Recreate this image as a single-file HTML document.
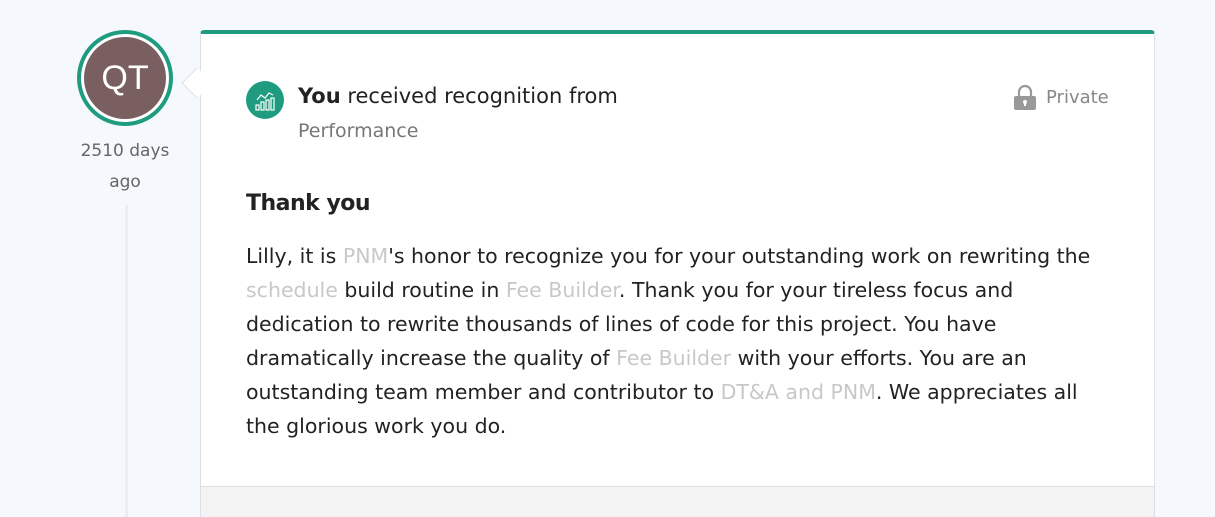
<!DOCTYPE html>
<html style="width:1215px;height:517px;overflow:hidden"><head><meta charset="utf-8"><style>
*{margin:0;padding:0;box-sizing:border-box}
body{width:1215px;height:517px;overflow:hidden;background:#f5f8fc;font-family:"DejaVu Sans","Liberation Sans",sans-serif;position:relative;color:#222}
.av{position:absolute;left:77px;top:30px;width:96px;height:96px;border-radius:50%;border:4px solid #1f9c7f;background:#fff;}
.av div{position:absolute;left:3px;top:3px;width:82px;height:82px;border-radius:50%;background:#7a5f60;color:#fff;font-size:34px;text-align:center;line-height:82px;font-family:"Liberation Sans",sans-serif}
.days{position:absolute;left:60px;top:136px;width:130px;text-align:center;color:#666;font-size:17px;line-height:31px}
.line{position:absolute;left:125px;top:205px;width:3px;height:312px;background:#eceef1}
.card{position:absolute;left:200px;top:30px;width:955px;height:487px;background:#fff;border:1px solid #dcdfe3;border-bottom:none;border-top:4px solid #1f9c7f;border-radius:4px 4px 0 0;overflow:hidden}
.arrow{position:absolute;left:186px;top:72px;width:22px;height:22px;background:#fff;border-left:1px solid #dcdfe3;border-bottom:1px solid #dcdfe3;transform:rotate(45deg)}
.foot{position:absolute;left:0;right:0;top:452px;height:35px;background:#f3f3f3;border-top:1px solid #ddd}
.ic{position:absolute;left:45px;top:47px;width:38px;height:38px;border-radius:50%;background:#1f9c7f}
.hd{position:absolute;left:97px;top:50px;font-size:21px;white-space:nowrap}
.perf{position:absolute;left:97px;top:86px;font-size:19px;color:#777}
.priv{position:absolute;left:812px;top:53px;font-size:18px;color:#888}
.priv svg{position:absolute;left:0;top:-3px}
.priv span{position:absolute;left:33px;white-space:nowrap}
h2{position:absolute;left:45px;top:157px;font-size:22px;font-weight:bold;letter-spacing:-0.5px}
.body{position:absolute;left:45px;top:205px;width:900px;font-size:20.5px;line-height:34px;white-space:nowrap}
.r{color:#c8c8c8}
</style></head><body>
<div class="line"></div>
<div class="av"><div>QT</div></div>
<div class="days">2510 days<br>ago</div>
<div class="card">
<div class="ic"><svg width="38" height="38" viewBox="0 0 38 38" fill="none" stroke="#fff" stroke-width="1.2"><polyline points="11,19 15,14 19,17 23,12 27,14"/><rect x="10" y="24" width="3" height="5"/><rect x="15" y="21" width="3" height="8"/><rect x="20" y="19" width="3" height="10"/><rect x="25" y="17" width="3" height="12"/></svg></div>
<div class="hd"><b>You</b> received recognition from <span style="color:#fff;font-weight:bold">HEADLEY WILLIAMSON</span></div>
<div class="perf">Performance</div>
<div class="priv"><svg width="24" height="28" viewBox="0 0 24 28"><path d="M6 12V8a6 6 0 0 1 12 0v4" fill="none" stroke="#999" stroke-width="2.2"/><rect x="1" y="12" width="22" height="14" rx="2" fill="#999"/><circle cx="12" cy="18" r="2" fill="#fff"/><rect x="11" y="18" width="2" height="4" fill="#fff"/></svg><span>Private</span></div>
<h2>Thank you</h2>
<div class="body">Lilly, it is <span class="r">PNM</span>'s honor to recognize you for your outstanding work on rewriting the<br><span class="r">schedule</span> build routine in <span class="r">Fee Builder</span>. Thank you for your tireless focus and<br>dedication to rewrite thousands of lines of code for this project. You have<br>dramatically increase the quality of <span class="r">Fee Builder</span> with your efforts. You are an<br>outstanding team member and contributor to <span class="r">DT&amp;A and PNM</span>. We appreciates all<br>the glorious work you do.</div>
<div class="foot"></div>
</div>
<div class="arrow"></div>
</body></html>
